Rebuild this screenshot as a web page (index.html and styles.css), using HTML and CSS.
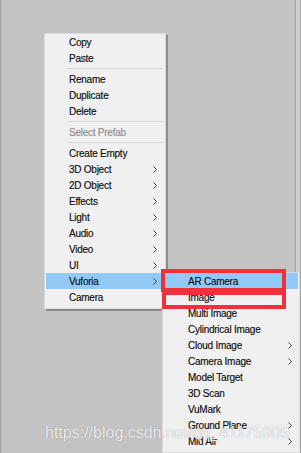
FILE: index.html
```html
<!DOCTYPE html>
<html>
<head>
<meta charset="utf-8">
<link rel="stylesheet" href="styles.css">
</head>
<body>
<div class="screen">
  <div class="menu menu-main">
    <div class="item">Copy</div>
    <div class="item">Paste</div>
    <div class="sep"></div>
    <div class="item">Rename</div>
    <div class="item">Duplicate</div>
    <div class="item">Delete</div>
    <div class="sep"></div>
    <div class="item disabled">Select Prefab</div>
    <div class="sep"></div>
    <div class="item">Create Empty</div>
    <div class="item">3D Object<svg class="arrow" viewBox="0 0 4 7"><polyline points="0.5,0.5 3.5,3.5 0.5,6.5"/></svg></div>
    <div class="item">2D Object<svg class="arrow" viewBox="0 0 4 7"><polyline points="0.5,0.5 3.5,3.5 0.5,6.5"/></svg></div>
    <div class="item">Effects<svg class="arrow" viewBox="0 0 4 7"><polyline points="0.5,0.5 3.5,3.5 0.5,6.5"/></svg></div>
    <div class="item">Light<svg class="arrow" viewBox="0 0 4 7"><polyline points="0.5,0.5 3.5,3.5 0.5,6.5"/></svg></div>
    <div class="item">Audio<svg class="arrow" viewBox="0 0 4 7"><polyline points="0.5,0.5 3.5,3.5 0.5,6.5"/></svg></div>
    <div class="item">Video<svg class="arrow" viewBox="0 0 4 7"><polyline points="0.5,0.5 3.5,3.5 0.5,6.5"/></svg></div>
    <div class="item">UI<svg class="arrow" viewBox="0 0 4 7"><polyline points="0.5,0.5 3.5,3.5 0.5,6.5"/></svg></div>
    <div class="item active">Vuforia<svg class="arrow" viewBox="0 0 4 7"><polyline points="0.5,0.5 3.5,3.5 0.5,6.5"/></svg></div>
    <div class="item">Camera</div>
  </div>

  <div class="menu menu-sub">
    <div class="item active">AR Camera</div>
    <div class="item">Image</div>
    <div class="item">Multi Image</div>
    <div class="item">Cylindrical Image</div>
    <div class="item">Cloud Image<svg class="arrow" viewBox="0 0 4 7"><polyline points="0.5,0.5 3.5,3.5 0.5,6.5"/></svg></div>
    <div class="item">Camera Image<svg class="arrow" viewBox="0 0 4 7"><polyline points="0.5,0.5 3.5,3.5 0.5,6.5"/></svg></div>
    <div class="item">Model Target</div>
    <div class="item">3D Scan</div>
    <div class="item">VuMark</div>
    <div class="item">Ground Plane<svg class="arrow" viewBox="0 0 4 7"><polyline points="0.5,0.5 3.5,3.5 0.5,6.5"/></svg></div>
    <div class="item">Mid Air<svg class="arrow" viewBox="0 0 4 7"><polyline points="0.5,0.5 3.5,3.5 0.5,6.5"/></svg></div>
  </div>

  <div class="mark mark-1"></div>
  <div class="mark mark-2"></div>
  <div class="watermark">https://blog.csdn.net/qq_41175905</div>
</div>
</body>
</html>
```

FILE: styles.css
```css
* { box-sizing: border-box; }
html, body { margin: 0; padding: 0; }
body {
  width: 301px;
  height: 453px;
  overflow: hidden;
  background: #c3c3c3;
  font-family: "Liberation Sans", Arial, sans-serif;
}
.screen {
  position: relative;
  width: 301px;
  height: 453px;
  padding: 33px 0 0 44px;
  box-shadow: inset 1px 0 #9e9e9e;
}
.screen::after {
  content: "";
  position: absolute;
  top: 0;
  bottom: 0;
  right: 0;
  width: 4px;
  background: #d0d0d0;
  border-left: 1px solid #a0a0a0;
  border-right: 1px solid #a8a8a8;
  z-index: 0;
}
.menu {
  position: relative;
  z-index: 1;
  background: #f0f0f0;
  border: 1px solid #d9d9d9;
  font-size: 10px;
  letter-spacing: -0.25px;
  color: #0f0f0f;
  -webkit-text-stroke: 0.15px currentColor;
}
.menu-main {
  width: 122px;
  padding: 0 0 3px;
  box-shadow: 2px 2px 0 #8c8c8c;
}
.menu-sub {
  position: absolute;
  z-index: 2;
  left: 162px;
  top: 272px;
  width: 138px;
  padding: 0 0 3px;
}
.item {
  height: 16px;
  margin: 0 1px;
  padding: 0 7px 0 23px;
  display: flex;
  align-items: center;
  justify-content: space-between;
  white-space: nowrap;
}
.menu-sub .item { padding: 0 6px 0 24px; }
.item.active { background: #92c9f7; }
.item.disabled { color: #8d8d8d; }
.arrow {
  width: 4px;
  height: 7px;
  fill: none;
  stroke: #3a3a3a;
  stroke-width: 1;
}
.sep {
  height: 1px;
  margin: 2px 2px 2px 22px;
  background: #d7d7d7;
}
.mark {
  position: absolute;
  z-index: 3;
  border: 4px solid #f0313a;
}
.mark-1 { left: 161px; top: 269px; width: 125px; height: 23px; }
.mark-2 { left: 162px; top: 291px; width: 124px; height: 18px; }
.watermark {
  position: absolute;
  z-index: 4;
  left: 45px;
  top: 425px;
  font-family: "Liberation Sans", Arial, sans-serif;
  font-size: 16px;
  line-height: 16px;
  color: rgba(255, 255, 255, 0.85);
  text-shadow: 0 0 1px rgba(0, 0, 0, 0.35);
  white-space: nowrap;
}
```
